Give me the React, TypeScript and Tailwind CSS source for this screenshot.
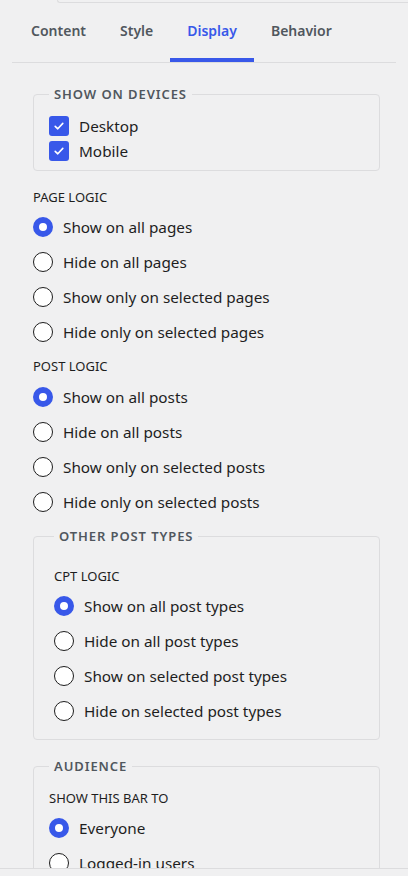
import React from "react";

const FONT = { fontFamily: '"Noto Sans", "Open Sans", sans-serif' };

function Radio({ checked, label }: { checked?: boolean; label: string }) {
  return (
    <div className="flex h-[35px] items-center gap-[10px]">
      <span
        className={
          checked
            ? "box-border block h-[20px] w-[20px] shrink-0 rounded-full border-[6px] border-[#3858e9] bg-white"
            : "box-border block h-[20px] w-[20px] shrink-0 rounded-full border-[1.5px] border-[#1e1e1e] bg-white"
        }
      />
      <span className="text-[15.3px] leading-[20px] text-[#1e1e1e]">{label}</span>
    </div>
  );
}

function Check({ label }: { label: string }) {
  return (
    <div className="flex h-[25px] items-center gap-[10px]">
      <span className="flex h-[20px] w-[20px] shrink-0 items-center justify-center rounded-[3px] bg-[#3858e9]">
        <svg width="14" height="14" viewBox="0 0 14 14" fill="none">
          <path d="M3.2 7.3 L5.8 9.8 L10.8 4.4" stroke="white" strokeWidth="1.6" strokeLinecap="round" strokeLinejoin="round" />
        </svg>
      </span>
      <span className="text-[15.3px] leading-[20px] text-[#1e1e1e]">{label}</span>
    </div>
  );
}

function Heading({ children }: { children: React.ReactNode }) {
  return <div className="h-[18px] text-[13px] leading-[18px] uppercase text-[#1e1e1e]">{children}</div>;
}

function Legend({ children }: { children: React.ReactNode }) {
  return (
    <legend className="px-[5px] text-[13px] font-semibold leading-[18px] uppercase tracking-[0.07em] text-[#50575e]">
      {children}
    </legend>
  );
}

export default function App() {
  const tabs = ["Content", "Style", "Display", "Behavior"];
  return (
    <div style={FONT} className="flex h-[876px] w-[408px] flex-col overflow-hidden bg-[#f0f0f1]">
      <div className="h-[3px] shrink-0 ml-[57px] rounded-bl-[3px] border-b border-l border-[#dcdcde]" />
      <div className="min-h-0 flex-1 overflow-hidden">
        <nav className="mx-3 flex border-b border-[#dcdcde] pl-[2px]">
          {tabs.map((t) => (
            <div
              key={t}
              className={
                t === "Display"
                  ? "flex h-[59px] items-center border-b-4 border-[#3858e9] px-[17px] text-[14px] font-semibold text-[#3858e9]"
                  : "flex h-[59px] items-center border-b-4 border-transparent px-[17px] text-[14px] font-semibold text-[#50575e]"
              }
            >
              {t}
            </div>
          ))}
        </nav>

        <div className="pl-[33px] pr-[28px] pt-[22px]">
          <fieldset className="rounded-[4px] border border-[#dcdcde] pb-[7px] pl-[15px]">
            <Legend>Show on devices</Legend>
            <div className="pt-[10px]">
              <Check label="Desktop" />
              <Check label="Mobile" />
            </div>
          </fieldset>

          <div className="mt-[17px]">
            <Heading>Page logic</Heading>
            <div className="mt-[3px]">
              <Radio checked label="Show on all pages" />
              <Radio label="Hide on all pages" />
              <Radio label="Show only on selected pages" />
              <Radio label="Hide only on selected pages" />
            </div>
          </div>

          <div className="mt-[8px]">
            <Heading>Post logic</Heading>
            <div className="mt-[4px]">
              <Radio checked label="Show on all posts" />
              <Radio label="Hide on all posts" />
              <Radio label="Show only on selected posts" />
              <Radio label="Hide only on selected posts" />
            </div>
          </div>

          <fieldset className="mt-[8px] rounded-[4px] border border-[#dcdcde] pb-[11px] pl-[20px]">
            <Legend>Other post types</Legend>
            <div className="pt-[22px]">
              <Heading>CPT logic</Heading>
              <div className="mt-[3px]">
                <Radio checked label="Show on all post types" />
                <Radio label="Hide on all post types" />
                <Radio label="Show on selected post types" />
                <Radio label="Hide on selected post types" />
              </div>
            </div>
          </fieldset>

          <fieldset className="mt-[17px] rounded-[4px] border border-[#dcdcde] pb-[11px] pl-[15px]">
            <Legend>Audience</Legend>
            <div className="pt-[14px]">
              <Heading>Show this bar to</Heading>
              <div className="mt-[3px]">
                <Radio checked label="Everyone" />
                <Radio label="Logged-in users" />
                <Radio label="Logged-out users" />
              </div>
            </div>
          </fieldset>
        </div>
      </div>
      <div className="h-[8px] shrink-0 border-t border-[#dcdcde] bg-[#f0f0f1]" />
    </div>
  );
}
